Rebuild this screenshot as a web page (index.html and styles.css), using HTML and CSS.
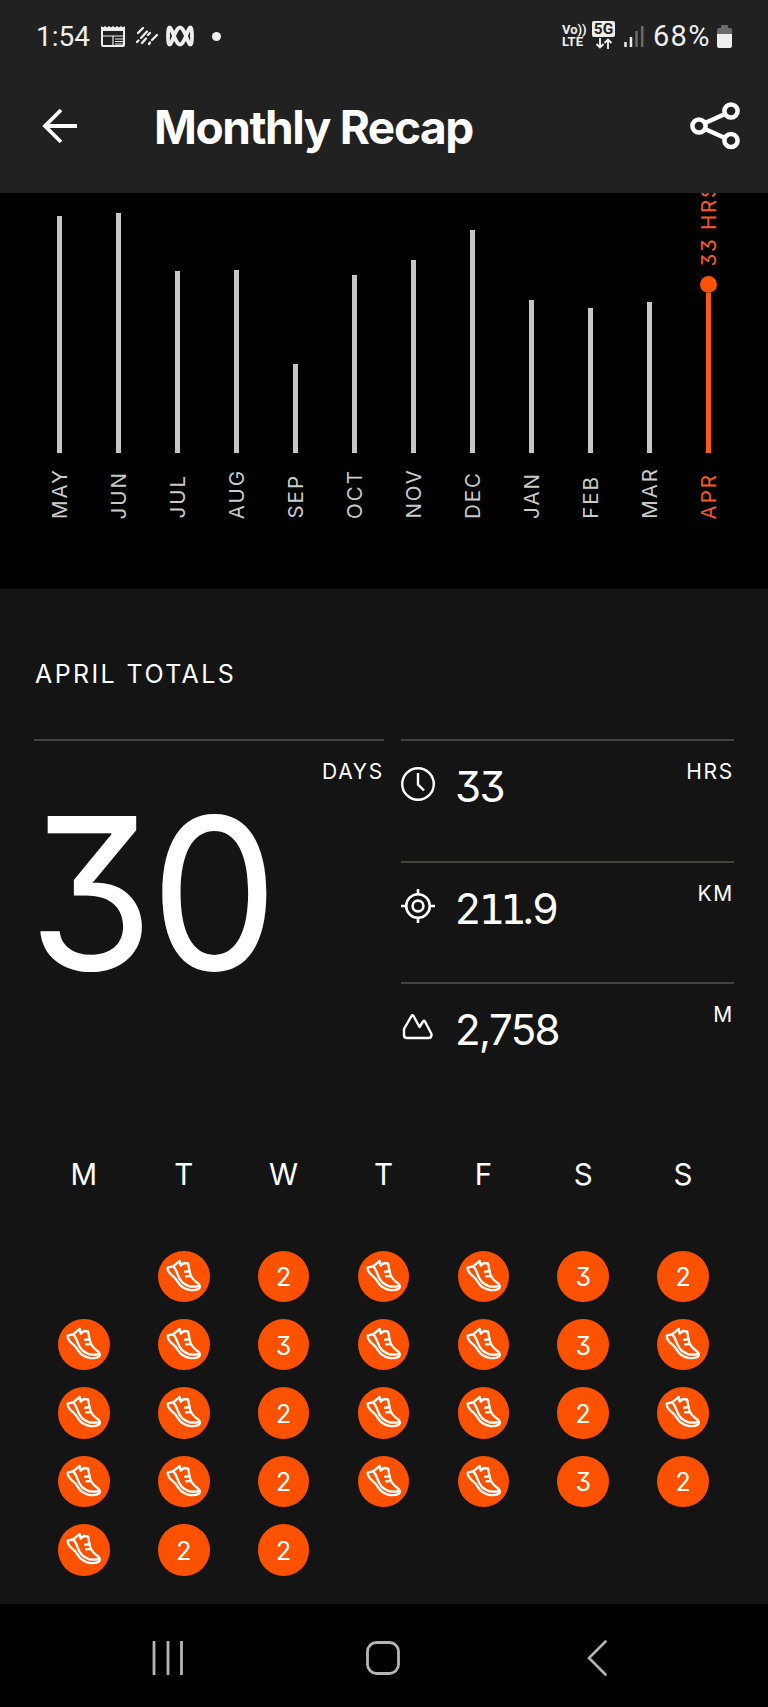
FILE: index.html
```html
<!DOCTYPE html>
<html lang="en">
<head>
<meta charset="utf-8">
<title>Monthly Recap</title>
<link rel="stylesheet" href="styles.css">
</head>
<body>
<svg class="defs" width="0" height="0" aria-hidden="true">
  <symbol id="shoe" viewBox="0 0 154 154">
    <g fill="none" stroke="#fff" stroke-width="7" stroke-linejoin="round" stroke-linecap="round">
      <path d="M29 50 L46 45 L65 30 L68 44 L77 36 L90 37 L95 64 C98 80 108 89 121 98 Q128 104 123 112 Q114 118 97 117 C78 115 67 106 58 91 C52 79 42 75 36 67 Q28 59 29 50Z"/>
      <path d="M46 46 C54 55 56 62 59 71 C64 87 77 100 92 105 Q106 108 122 105"/>
      <path d="M81 62 L94 60 M84 76 L98 75"/>
    </g>
  </symbol>
</svg>
<div class="phone">
  <header class="top">
    <div class="status">
      <span class="time">1:54</span>
      <svg width="24" height="21" viewBox="0 0 24 21"><path d="M1 1V19Q1 20 2 20H22Q23 20 23 19V1" fill="none" stroke="#eee" stroke-width="2"/><path d="M0 5V0L2 1.5 4 0 6 1.5 8 0 10 1.5 12 0 14 1.5 16 0 18 1.5 20 0 22 1.5 24 0V5Z" fill="#eee"/><path d="M1 10H23M12 10V20M14 13H22M14 15.500H22M14 18H22" stroke="#eee" stroke-width="1.200"/></svg>
      <svg class="s-lines" width="24" height="20" viewBox="0 0 24 20"><path d="M3 7L8 2M2 16L3.500 14.500M6 12L12 5.500M7 17L11 12.500M13 9L15 7M14 18L15 16.500M17 14L22 9" stroke="#eee" stroke-width="2.3" stroke-linecap="round" fill="none"/></svg>
      <svg class="s-abc" width="30" height="22" viewBox="0 0 30 22"><path id="loops" fill="none" stroke="#eee" stroke-width="3.800"/></svg>
      <span class="s-dot"></span>
      <span class="s-space"></span>
      <span class="volte"><span>Vo))</span><span>LTE</span></span>
      <span class="net"><span class="g5">5G</span><svg width="18" height="11" viewBox="0 0 18 11"><path d="M5 0V9.500M1.500 6L5 9.500 8.500 6M13 11V1.500M9.500 5L13 1.500 16.500 5" fill="none" stroke="#eee" stroke-width="1.900"/></svg></span>
      <svg width="20" height="21" viewBox="0 0 20 21"><path d="M1.500 16V21M7 11V21" stroke="#eee" stroke-width="2.500"/><path d="M12.500 5V21M18.200 0V21" stroke="#6b6b6b" stroke-width="2.500"/></svg>
      <span class="pct">68%</span>
      <svg width="15" height="23" viewBox="0 0 15 23"><path d="M0 10V5Q0 3 2 3H4V1Q4 0 5 0H10Q11 0 11 1V3H13Q15 3 15 5V10Z" fill="#6b6b6b"/><path d="M0 9H15V21Q15 23 13 23H2Q0 23 0 21Z" fill="#eee"/></svg>
    </div>
    <div class="appbar">
      <svg width="36" height="36" viewBox="0 0 36 36"><path d="M19 2L3 18 19 34M3 18H35" fill="none" stroke="#fff" stroke-width="3.800"/></svg>
      <h1 class="title">Monthly Recap</h1>
      <svg width="50" height="48" viewBox="0 0 50 48"><g fill="none" stroke="#fff" stroke-width="4.500"><circle cx="9" cy="24" r="6.600"/><circle cx="41" cy="9" r="6.600"/><circle cx="41" cy="38.500" r="6.600"/><path d="M15 21L35 12M15 27L35 36"/></g></svg>
    </div>
  </header>
  <section class="chart" id="chart"></section>
  <main class="totals">
    <h2 class="heading">APRIL TOTALS</h2>
    <div class="stats">
      <div class="days"><span class="unit">DAYS</span><span class="big">30</span></div>
      <div class="list">
        <div class="stat"><svg width="34" height="34" viewBox="0 0 34 34"><g fill="none" stroke="#fff" stroke-width="2.400"><circle cx="17" cy="17" r="15.800"/><path d="M17 6V17.500L23 23.500"/></g></svg><span class="num">33</span><span class="unit">HRS</span></div>
        <div class="stat"><svg width="34" height="34" viewBox="0 0 34 34"><g fill="none" stroke="#fff" stroke-width="2.600"><circle cx="17" cy="17" r="11.800"/><circle cx="17" cy="17" r="5.400"/><path d="M17 0V5M17 29V34M0 17H5M29 17H34"/></g></svg><span class="num">2<span class="one">11</span>.9</span><span class="unit">KM</span></div>
        <div class="stat"><svg width="34" height="34" viewBox="0 0 34 34"><path d="M3 19L10.500 6Q11.500 4.500 12.500 6L18.500 17 22 11.500Q23 10 24 11.500L30.500 24V25Q30.500 28 27.500 28H6Q3 28 3 25Z" fill="none" stroke="#fff" stroke-width="2.400" stroke-linejoin="round"/></svg><span class="num">2,758</span><span class="unit">M</span></div>
      </div>
    </div>
    <div class="week"><span>M</span><span>T</span><span>W</span><span>T</span><span>F</span><span>S</span><span>S</span></div>
    <div class="cal" id="cal"></div>
  </main>
  <nav class="nav">
    <svg width="32" height="34" viewBox="0 0 32 34"><path d="M2 1V33M16 1V33M29.500 1V33" stroke="#b4b4b4" stroke-width="2.800" stroke-linecap="round"/></svg>
    <svg class="home" width="34" height="34" viewBox="0 0 34 34"><rect x="1.500" y="1.500" width="31" height="31" rx="9" fill="none" stroke="#b4b4b4" stroke-width="2.800"/></svg>
    <svg width="20" height="36" viewBox="0 0 20 36"><path d="M18.500 1.500L2 18 18.500 34.500" fill="none" stroke="#b4b4b4" stroke-width="2.600" stroke-linecap="round"/></svg>
  </nav>
</div>
<script src="app.js"></script>
</body>
</html>
```
FILE: styles.css
```css
* { box-sizing: border-box; }
body { margin: 0; background: #141414; color: #fff; font-family: Inter, "Liberation Sans", sans-serif; font-feature-settings: "cv09"; }
svg { display: block; flex: none; }
.defs { position: absolute; }
.phone { width: 768px; height: 1707px; display: flex; flex-direction: column; overflow: hidden; }
.top { height: 193px; background: #212121; flex: none; }
.status { height: 72px; padding: 0 36px; display: flex; align-items: center; color: #eee; }
.time { font-family: Roboto, sans-serif; font-size: 28px; width: 65px; white-space: nowrap; }
.s-lines { margin-left: 10px; }
.s-abc { margin-left: 6px; }
.s-dot { width: 9px; height: 9px; border-radius: 50%; background: #eee; margin-left: 17px; }
.s-space { flex: 1; }
.volte { display: flex; flex-direction: column; font-family: Roboto, sans-serif; font-size: 13px; line-height: 12px; font-weight: 700; width: 22px; white-space: nowrap; }
.net { display: flex; flex-direction: column; align-items: center; gap: 1px; margin: -2px 9px 0 8px; }
.g5 { background: #eee; color: #212121; border-radius: 2px; font-family: Roboto, sans-serif; font-size: 15.5px; line-height: 16px; font-weight: 700; width: 23px; text-align: center; }
.pct { font-family: Roboto, sans-serif; font-size: 29px; letter-spacing: 1.3px; width: 64px; margin-left: 9px; margin-right: 0; white-space: nowrap; }
.appbar { height: 107px; padding: 0 28px 0 42px; display: flex; align-items: center; }
.title { flex: 1; margin: 2px 0 0 76px; font-size: 46px; line-height: 56px; font-weight: 700; letter-spacing: -1.4px; white-space: nowrap; }
.chart { height: 396px; flex: none; background: #000; padding: 0 30px; display: grid; grid-template-columns: repeat(12, 1fr); overflow: hidden; }
.month { display: flex; flex-direction: column; align-items: center; justify-content: flex-end; color: #cacaca; height: 326px; }
.bar { width: 4.5px; background: #c6c6c6; flex: none; }
.name { height: 66px; flex: none; display: flex; align-items: flex-end; }
.vert { writing-mode: vertical-rl; transform: rotate(180deg); font-size: 20.5px; line-height: 24px; letter-spacing: 2px; white-space: nowrap; flex: none; }
.current { color: #f95a26; }
.current .bar { background: #f95a16; }
.dot { width: 17px; height: 17px; border-radius: 50%; background: #fc5200; flex: none; }
.current .hours { margin-bottom: 9px; letter-spacing: 1.8px; }
.totals { height: 1015px; flex: none; padding: 0 34px; background: #141414; }
.heading { margin: 70px 0 0 1px; font-size: 25px; line-height: 30px; font-weight: 400; letter-spacing: 2.4px; }
.stats { display: grid; grid-template-columns: 350px 333px; gap: 17px; margin-top: 50px; }
.days { border-top: 2px solid #44443d; display: flex; flex-direction: column; }
.days .unit { align-self: flex-end; }
.unit { font-size: 21px; line-height: 26px; letter-spacing: 1.7px; margin-top: 18px; margin-right: 0; }
.big { font-size: 211px; line-height: 211px; height: 211px; letter-spacing: -4px; margin-top: 3px; margin-left: -6px; transform: scaleX(.963); transform-origin: left; }
.stat { height: 121.700px; border-top: 2px solid #44443d; display: flex; align-items: flex-start; }
.stat svg { margin-top: 26px; }
.num { flex: 1; margin: 20px 0 0 20px; font-size: 42px; line-height: 52px; letter-spacing: -1.6px; }
.one { font-family: "DejaVu Sans", sans-serif; font-size: 41px; letter-spacing: -4.5px; line-height: 40px; }
.week { display: grid; grid-template-columns: repeat(7, 1fr); text-align: center; font-size: 29.500px; line-height: 36px; margin-top: 52px; margin-right: 1px; }
.cal { display: grid; grid-template-columns: repeat(7, 1fr); grid-auto-rows: 68.400px; margin-top: 50px; margin-right: 1px; justify-items: center; align-items: center; }
.day { width: 51.500px; height: 51.500px; border-radius: 50%; background: #fc5200; display: flex; align-items: center; justify-content: center; font-size: 25px; padding-top: 2px; }
.day.shoe { padding: 0; }
.nav { height: 103px; flex: none; background: #000; display: flex; align-items: center; padding: 4px 161px 0 152px; justify-content: space-between; }
.home { margin-right: 6px; }
```
FILE: app.js
```js
const months = [["MAY",237],["JUN",240],["JUL",182],["AUG",183],["SEP",89],["OCT",178],["NOV",193],["DEC",223],["JAN",153],["FEB",145],["MAR",151],["APR",160]];
document.getElementById("chart").innerHTML = months.map(([name, h]) => {
  const now = name === "APR";
  return `<div class="month${now ? " current" : ""}">${now ? '<span class="vert hours">33 HRS</span><span class="dot"></span>' : ""}<span class="bar" style="height:${h}px"></span><span class="name"><span class="vert">${name}</span></span></div>`;
}).join("");
const days = "-r2rr32 rr3rr3r rr2rr2r rr2rr32 r22".replace(/ /g, "");
document.getElementById("cal").innerHTML = [...days].map(d =>
  d === "-" ? "<span></span>" :
  d === "r" ? '<span class="day shoe"><svg width="51.500" height="51.500"><use href="#shoe"/></svg></span>' :
  `<span class="day">${d}</span>`).join("");

// Three-lobed Lissajous curve for the broadcaster notification icon
const pts = [];
for (let i = 0; i < 90; i++) {
  const t = i / 90 * Math.PI * 2;
  pts.push((15 + 12 * Math.sin(t)).toFixed(2) + " " + (11 - 8.500 * Math.cos(3 * t)).toFixed(2));
}
document.getElementById("loops").setAttribute("d", "M" + pts.join("L") + "Z");
```
